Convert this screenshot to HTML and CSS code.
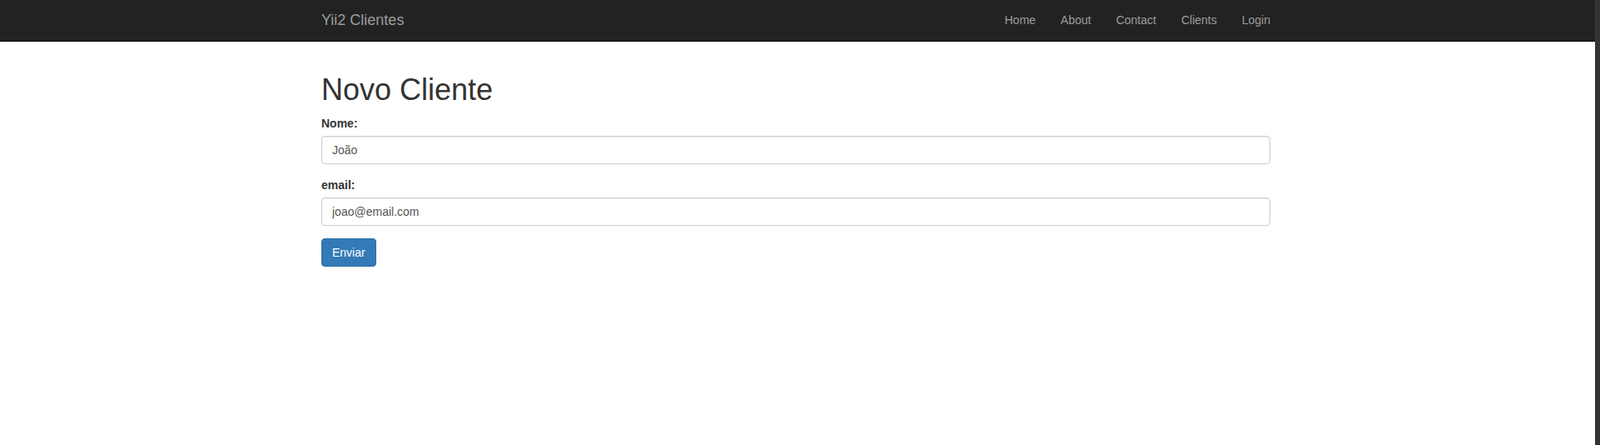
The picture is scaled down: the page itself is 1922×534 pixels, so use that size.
FILE: index.html
```html
<!DOCTYPE html>
<html lang="pt">
<head>
<meta charset="utf-8">
<title>Novo Cliente</title>
<link rel="stylesheet" href="styles.css">
</head>
<body>
<div class="page">
  <div class="main">
    <nav class="navbar">
      <div class="container nav-inner">
        <a class="brand" href="#">Yii2 Clientes</a>
        <ul class="nav">
          <li><a href="#">Home</a></li>
          <li><a href="#">About</a></li>
          <li><a href="#">Contact</a></li>
          <li><a href="#">Clients</a></li>
          <li><a href="#">Login</a></li>
        </ul>
      </div>
    </nav>
    <div class="container content">
      <h1>Novo Cliente</h1>
      <form>
        <div class="form-group">
          <label>Nome:</label>
          <input class="form-control" type="text" value="João">
        </div>
        <div class="form-group">
          <label>email:</label>
          <input class="form-control" type="text" value="joao@email.com">
        </div>
        <button class="btn" type="button">Enviar</button>
      </form>
    </div>
  </div>
  <div class="scrollbar"></div>
</div>
</body>
</html>
```

FILE: styles.css
```css
* { box-sizing: border-box; }
html, body { margin: 0; padding: 0; height: 100%; overflow: hidden; }
body {
  font-family: "Liberation Sans", Arial, Helvetica, sans-serif;
  font-size: 14px;
  line-height: 1.42857143;
  color: #333;
  background: #fff;
}
.page { display: flex; height: 100%; }
.main { flex: 1; }
.scrollbar { width: 6px; background: #333; border-left: 1px solid #3a3a3a; }
.navbar {
  background: #222;
  border-bottom: 1px solid #080808;
  height: 50px;
}
.container {
  width: 1170px;
  margin: 0 0 0 calc((100% - 1174px) / 2);
  padding: 0 15px;
}
.nav-inner { display: flex; justify-content: space-between; height: 49px; }
.brand {
  color: #9d9d9d;
  text-decoration: none;
  font-size: 18px;
  line-height: 20px;
  padding: 14px 15px 15px;
  margin-left: -15px;
}
.nav { list-style: none; margin: 0 -15px 0 0; padding: 0; display: flex; }
.nav a {
  display: block;
  color: #9d9d9d;
  text-decoration: none;
  padding: 14px 15px 15px;
  line-height: 20px;
}
.content { padding-top: 18px; }
h1 {
  font-size: 36px;
  font-weight: 500;
  line-height: 1.1;
  margin: 20px 0 10px;
  color: #333;
}
.form-group { margin-bottom: 15px; }
label { display: block; font-weight: bold; margin-bottom: 5px; }
.form-control {
  display: block;
  width: 100%;
  height: 34px;
  padding: 6px 12px;
  font-family: inherit;
  font-size: 14px;
  line-height: 1.42857143;
  color: #555;
  background: #fff;
  border: 1px solid #ccc;
  border-radius: 4px;
  box-shadow: inset 0 1px 1px rgba(0,0,0,.075);
}
.btn {
  font-family: inherit;
  font-size: 14px;
  line-height: 1.42857143;
  padding: 6px 12px;
  color: #fff;
  background: #337ab7;
  border: 1px solid #2e6da4;
  border-radius: 4px;
}
```
